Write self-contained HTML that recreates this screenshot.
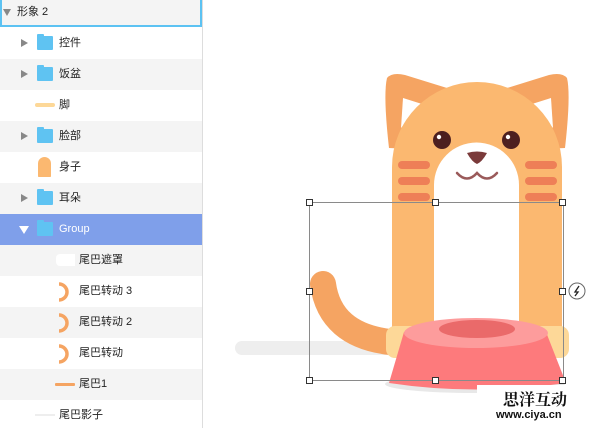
<!DOCTYPE html>
<html><head><meta charset="utf-8"><style>
*{margin:0;padding:0;box-sizing:border-box}
body{width:605px;height:428px;overflow:hidden;background:#fff;font-family:"Liberation Sans","Noto Sans CJK SC",sans-serif;font-size:11px;color:#222;position:relative}
.panel{position:absolute;left:0;top:0;width:203px;height:428px;border-right:1px solid #ddd;background:#fff}
.row{position:absolute;left:0;width:202px;height:31px;line-height:31px}
.g{background:#f4f4f4}
.tri{position:absolute;top:11px;width:0;height:0;border-top:4.5px solid transparent;border-bottom:4.5px solid transparent;border-left:7px solid #888}
.fold{position:absolute;top:8px;width:16px;height:14px;background:#5fc3f2;border-radius:1px}
.fold:before{content:"";position:absolute;left:0;top:-2px;width:7px;height:3px;background:#5fc3f2;border-radius:1px 1px 0 0}
.t{position:absolute}
</style></head><body>
<div class="panel">
<div class="row" style="top:0;height:27px;line-height:24px;border:2px solid #5cc2f2;border-top:none;background:#f4f4f4"><div style="position:absolute;left:1px;top:9px;border-left:4.5px solid transparent;border-right:4.5px solid transparent;border-top:7px solid #888"></div><span class="t" style="left:15px">形象 2</span></div>
<div class="row" style="top:28px"><div class="tri" style="left:21px"></div><div class="fold" style="left:37px"></div><span class="t" style="left:59px">控件</span></div>
<div class="row g" style="top:59px"><div class="tri" style="left:21px"></div><div class="fold" style="left:37px"></div><span class="t" style="left:59px">饭盆</span></div>
<div class="row" style="top:90px"><div style="position:absolute;left:35px;top:13px;width:20px;height:4px;border-radius:2px;background:#fdd898"></div><span class="t" style="left:59px">脚</span></div>
<div class="row g" style="top:121px"><div class="tri" style="left:21px"></div><div class="fold" style="left:37px"></div><span class="t" style="left:59px">脸部</span></div>
<div class="row" style="top:152px"><div style="position:absolute;left:38px;top:5px;width:13px;height:20px;border-radius:7px 7px 1px 1px;background:#fbb870"></div><span class="t" style="left:59px">身子</span></div>
<div class="row g" style="top:183px"><div class="tri" style="left:21px"></div><div class="fold" style="left:37px"></div><span class="t" style="left:59px">耳朵</span></div>
<div class="row" style="top:214px;background:#7f9fea;color:#fff"><div style="position:absolute;left:19px;top:12px;border-left:5px solid transparent;border-right:5px solid transparent;border-top:8px solid #fff"></div><div class="fold" style="left:37px"></div><span class="t" style="left:59px">Group</span></div>
<div class="row g" style="top:245px"><div style="position:absolute;left:56px;top:9px;width:19px;height:12px;background:#fff;border-radius:4px 0 0 4px"></div><span class="t" style="left:79px">尾巴遮罩</span></div>
<div class="row" style="top:276px"><svg style="position:absolute;left:56px;top:6px" width="14" height="20"><path d="M3 2 A8 8 0 0 1 3 18" stroke="#f5a462" stroke-width="3.5" fill="none"/></svg><span class="t" style="left:79px">尾巴转动 3</span></div>
<div class="row g" style="top:307px"><svg style="position:absolute;left:56px;top:6px" width="14" height="20"><path d="M3 2 A8 8 0 0 1 3 18" stroke="#f5a462" stroke-width="3.5" fill="none"/></svg><span class="t" style="left:79px">尾巴转动 2</span></div>
<div class="row" style="top:338px"><svg style="position:absolute;left:56px;top:6px" width="14" height="20"><path d="M3 2 A8 8 0 0 1 3 18" stroke="#f5a462" stroke-width="3.5" fill="none"/></svg><span class="t" style="left:79px">尾巴转动</span></div>
<div class="row g" style="top:369px"><div style="position:absolute;left:55px;top:14px;width:20px;height:3px;background:#f5a462;border-radius:1px"></div><span class="t" style="left:79px">尾巴1</span></div>
<div class="row" style="top:400px"><div style="position:absolute;left:35px;top:14px;width:20px;height:2px;background:#eee"></div><span class="t" style="left:59px">尾巴影子</span></div>
</div>
<svg style="position:absolute;left:0;top:0" width="605" height="428">
<rect x="235" y="341" width="170" height="14" rx="7" fill="#eeeeee"/>
<path d="M323 284 Q330 335 390 342" stroke="#f5a462" stroke-width="26" fill="none" stroke-linecap="round"/>
<path d="M389 148 Q383 95 387 78 Q392 72 405 75 L447 88 L430 150 Z" fill="#f5a462"/>
<path d="M565 148 Q571 95 567 78 Q562 72 549 75 L507 88 L524 150 Z" fill="#f5a462"/>
<path d="M401 128 L403 98 L422 104 Z" fill="#fff"/>
<path d="M553 128 L551 98 L532 104 Z" fill="#fff"/>
<path d="M392 330 L392 167 A85 85 0 0 1 562 167 L562 330 Z" fill="#fbb870"/>
<path d="M434 330 L434 185 A42.5 42.5 0 0 1 519 185 L519 330 Z" fill="#fff"/>
<g fill="#ee7f57"><rect x="398" y="161" width="32" height="8" rx="4"/><rect x="398" y="177" width="32" height="8" rx="4"/><rect x="398" y="193" width="32" height="8" rx="4"/><rect x="525" y="161" width="32" height="8" rx="4"/><rect x="525" y="177" width="32" height="8" rx="4"/><rect x="525" y="193" width="32" height="8" rx="4"/></g>
<circle cx="442" cy="140" r="9" fill="#4d1f1f"/><circle cx="439" cy="137" r="2.2" fill="#fff"/>
<circle cx="511" cy="140" r="9" fill="#4d1f1f"/><circle cx="508" cy="137" r="2.2" fill="#fff"/>
<path d="M467 153 Q477 150 487 153 Q482 162 477 164 Q472 162 467 153 Z" fill="#7a3a3a"/>
<path d="M457 173 Q467 184 477 173 Q487 184 497 173" stroke="#9a5a5a" stroke-width="2.5" fill="none" stroke-linecap="round"/>
<rect x="386" y="326" width="183" height="32" rx="9" fill="#fdd898"/>
<ellipse cx="475" cy="384" rx="90" ry="9" fill="#e8e8e8"/>
<path d="M404 332 L546 332 L566 383 Q475 396 389 383 Z" fill="#fd7a7c"/>
<ellipse cx="476" cy="333" rx="72" ry="15" fill="#fd9c9c"/>
<ellipse cx="477" cy="329" rx="38" ry="9" fill="#ea6a6a"/>
<rect x="309.5" y="202.5" width="254" height="178" fill="none" stroke="#8a8a8a" stroke-width="1"/>
<g fill="#fff" stroke="#333" stroke-width="1">
<rect x="306.5" y="199.5" width="6" height="6"/><rect x="432.5" y="199.5" width="6" height="6"/><rect x="559.5" y="199.5" width="6" height="6"/>
<rect x="306.5" y="288.5" width="6" height="6"/><rect x="559.5" y="288.5" width="6" height="6"/>
<rect x="306.5" y="377.5" width="6" height="6"/><rect x="432.5" y="377.5" width="6" height="6"/><rect x="559.5" y="377.5" width="6" height="6"/>
</g>
<circle cx="577" cy="291" r="8" fill="#fff" stroke="#666" stroke-width="1"/>
<path d="M579 286 L575 292 L578 292 L575 296" stroke="#222" stroke-width="1.3" fill="none"/>
<rect x="477" y="385" width="128" height="43" fill="#fff"/>
<text x="503" y="405" font-family="Liberation Serif,Noto Serif CJK SC,serif" font-size="16" font-weight="bold" fill="#111">思洋互动</text>
<text x="496" y="418" font-family="Liberation Sans,sans-serif" font-size="11" font-weight="bold" fill="#111">www.ciya.cn</text>
</svg>
</body></html>
